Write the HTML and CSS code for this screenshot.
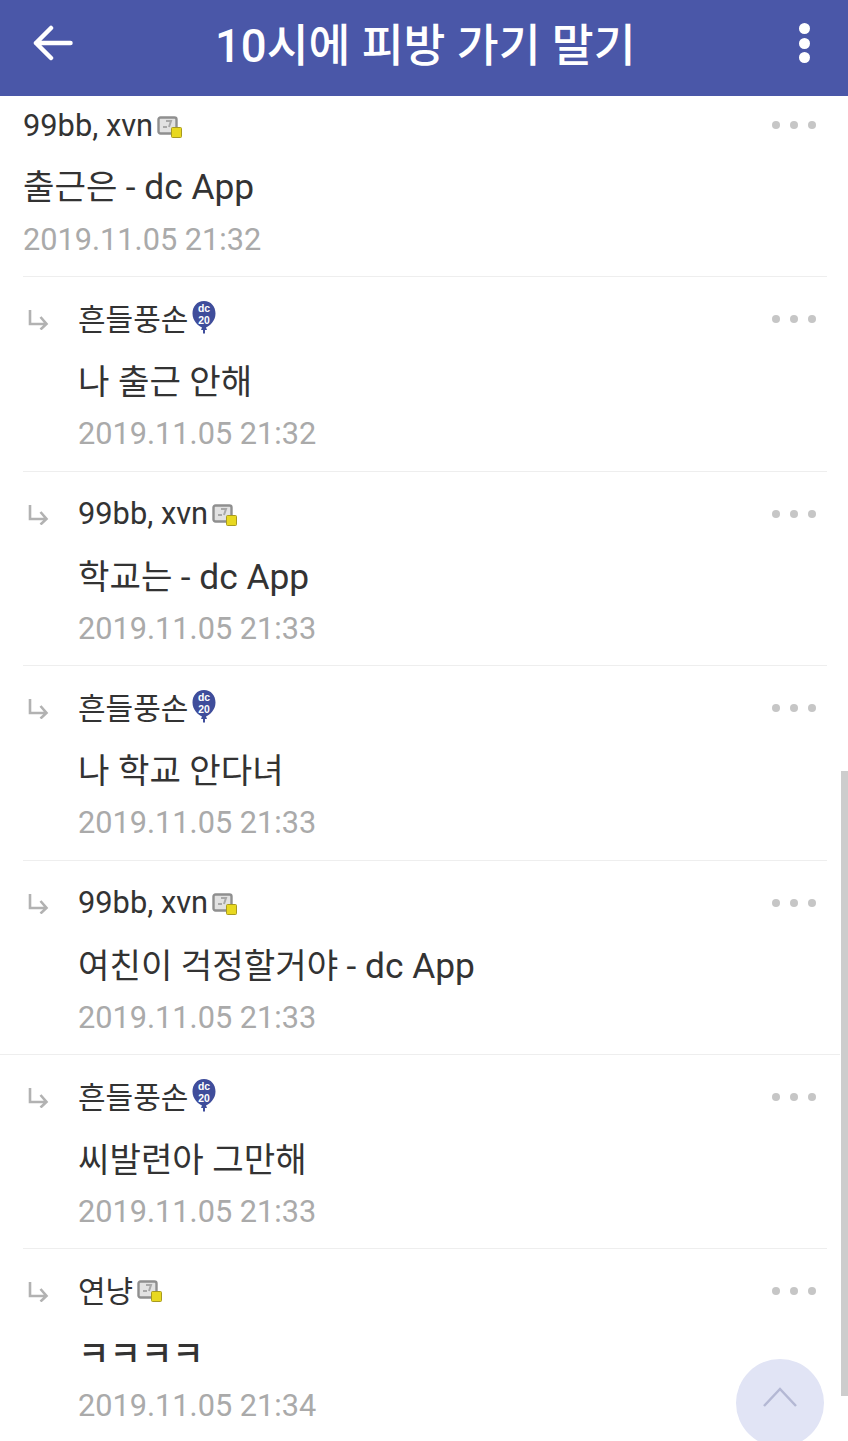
FILE: index.html
```html
<!DOCTYPE html>
<html lang="ko">

<head>
    <meta charset="utf-8">
    <meta name="viewport" content="width=device-width, initial-scale=1.0">
    <title>10시에 피방 가기 말기</title>
    <link rel="stylesheet" href="styles.css">
</head>

<body>
    <svg class="defs" width="0" height="0">
        <symbol id="nogonick" viewBox="0 0 25 22">
            <rect x="1.500" y="1.500" width="18" height="16" rx="2" fill="#e2e2e2" stroke="#8f8f8f" stroke-width="2.400" />
            <path d="M6 11h4M9 5h5l-2 6" stroke="#a8a8a8" stroke-width="2" fill="none" />
            <rect x="14.500" y="11.500" width="10" height="10" rx="1" fill="#e8d820" stroke="#a89a20" stroke-width="1" />
        </symbol>
        <symbol id="reply" viewBox="0 0 22 22">
            <path d="M3 2V16H19M13.500 9L19.500 16L13.500 21.500" fill="none" stroke="#b2b2b2" stroke-width="2.600" />
        </symbol>
    </svg>

    <div class="page">
        <header class="topbar">
            <svg class="back" viewBox="0 0 40 36" width="40" height="36">
                <path d="M37.500 18H3M18 3L3 18L18 33" fill="none" stroke="#fff" stroke-width="4.500" stroke-linecap="round" stroke-linejoin="round" />
            </svg>
            <h1 class="title">10시에 피방 가기 말기</h1>
            <div class="kebab"><span></span><span></span><span></span></div>
        </header>

        <main class="list">
            <div class="comment first">
                <div class="body">
                    <div class="name latin">99bb, xvn<svg class="badge"><use href="#nogonick" /></svg></div>
                    <div class="text">출근은 <span class="tail">- dc App</span></div>
                    <div class="date">2019.11.05 21:32</div>
                </div>
                <div class="more"><span></span><span></span><span></span></div>
            </div>
            <div class="comment">
                <svg class="arrow"><use href="#reply" /></svg>
                <div class="body">
                    <div class="name">흔들풍손<svg class="badge tall" viewBox="0 0 26 34"><path d="M13 1C6 1 1.500 6.500 1.500 13.500C1.500 21 7.500 26 11 27.500L10 30H12V33.500H14V30H16L15 27.500C18.500 26 24.500 21 24.500 13.500C24.500 6.500 20 1 13 1Z" fill="#3f4d9b" /><text class="balloon-text" x="13" y="11.500" text-anchor="middle">dc</text><text class="balloon-text" x="13" y="23.500" text-anchor="middle">20</text></svg></div>
                    <div class="text">나 출근 안해</div>
                    <div class="date">2019.11.05 21:32</div>
                </div>
                <div class="more"><span></span><span></span><span></span></div>
            </div>
            <div class="comment">
                <svg class="arrow"><use href="#reply" /></svg>
                <div class="body">
                    <div class="name latin">99bb, xvn<svg class="badge"><use href="#nogonick" /></svg></div>
                    <div class="text">학교는 <span class="tail">- dc App</span></div>
                    <div class="date">2019.11.05 21:33</div>
                </div>
                <div class="more"><span></span><span></span><span></span></div>
            </div>
            <div class="comment">
                <svg class="arrow"><use href="#reply" /></svg>
                <div class="body">
                    <div class="name">흔들풍손<svg class="badge tall" viewBox="0 0 26 34"><path d="M13 1C6 1 1.500 6.500 1.500 13.500C1.500 21 7.500 26 11 27.500L10 30H12V33.500H14V30H16L15 27.500C18.500 26 24.500 21 24.500 13.500C24.500 6.500 20 1 13 1Z" fill="#3f4d9b" /><text class="balloon-text" x="13" y="11.500" text-anchor="middle">dc</text><text class="balloon-text" x="13" y="23.500" text-anchor="middle">20</text></svg></div>
                    <div class="text">나 학교 안다녀</div>
                    <div class="date">2019.11.05 21:33</div>
                </div>
                <div class="more"><span></span><span></span><span></span></div>
            </div>
            <div class="comment wide-line">
                <svg class="arrow"><use href="#reply" /></svg>
                <div class="body">
                    <div class="name latin">99bb, xvn<svg class="badge"><use href="#nogonick" /></svg></div>
                    <div class="text">여친이 걱정할거야 <span class="tail">- dc App</span></div>
                    <div class="date">2019.11.05 21:33</div>
                </div>
                <div class="more"><span></span><span></span><span></span></div>
            </div>
            <div class="comment">
                <svg class="arrow"><use href="#reply" /></svg>
                <div class="body">
                    <div class="name">흔들풍손<svg class="badge tall" viewBox="0 0 26 34"><path d="M13 1C6 1 1.500 6.500 1.500 13.500C1.500 21 7.500 26 11 27.500L10 30H12V33.500H14V30H16L15 27.500C18.500 26 24.500 21 24.500 13.500C24.500 6.500 20 1 13 1Z" fill="#3f4d9b" /><text class="balloon-text" x="13" y="11.500" text-anchor="middle">dc</text><text class="balloon-text" x="13" y="23.500" text-anchor="middle">20</text></svg></div>
                    <div class="text">씨발련아 그만해</div>
                    <div class="date">2019.11.05 21:33</div>
                </div>
                <div class="more"><span></span><span></span><span></span></div>
            </div>
            <div class="comment">
                <svg class="arrow"><use href="#reply" /></svg>
                <div class="body">
                    <div class="name">연냥<svg class="badge"><use href="#nogonick" /></svg></div>
                    <div class="text heavy">ㅋㅋㅋㅋ</div>
                    <div class="date">2019.11.05 21:34</div>
                </div>
                <div class="more"><span></span><span></span><span></span></div>
            </div>
        </main>

        <div class="scrollbar"></div>
        <button class="to-top">
            <svg viewBox="0 0 36 22" width="36" height="22">
                <path d="M2 20L18 3L34 20" fill="none" stroke="#b4b8d4" stroke-width="2.500" />
            </svg>
        </button>
    </div>
</body>

</html>
```

FILE: styles.css
```css
* {
    box-sizing: border-box;
}

body {
    margin: 0;
    background: #fff;
    font-family: Roboto, "Noto Sans CJK KR", sans-serif;
    color: #333;
}

.defs {
    position: absolute;
}

.page {
    position: relative;
    height: 1441px;
    overflow: hidden;
}

.topbar {
    height: 96px;
    display: flex;
    align-items: center;
    padding: 0 38px 10px 33px;
    background: #4a57a8;
}

.title {
    margin: 0 0 2px 142px;
    font-size: 45.5px;
    font-weight: 500;
    color: #fff;
    white-space: nowrap;
}

.kebab {
    display: flex;
    flex-direction: column;
    gap: 3.5px;
    margin-left: auto;
}

.kebab span {
    width: 11px;
    height: 11px;
    border-radius: 50%;
    background: #fff;
}

.comment {
    position: relative;
    height: 194.4px;
    display: flex;
    padding: 20px 0 0 27px;
}

.comment::after {
    content: "";
    position: absolute;
    left: 23px;
    right: 21px;
    bottom: 0;
    height: 1px;
    background: #eee;
}

.comment.first {
    height: 181.4px;
    padding: 8px 0 0 23px;
}

.comment.wide-line::after {
    left: 0;
    right: 8px;
}

.arrow {
    width: 22px;
    height: 22px;
    margin: 11px 29px 0 0;
    flex: none;
}

.name {
    height: 40px;
    display: flex;
    align-items: center;
    font-size: 30px;
    color: #333;
    white-space: nowrap;
}

.name.latin {
    padding-top: 4px;
    font-size: 30.8px;
}

.first .name.latin {
    padding-top: 2px;
}

.badge {
    width: 25px;
    height: 22px;
    margin: 3px 0 0 4px;
}

.badge.tall {
    width: 26px;
    height: 34px;
    margin: 0 0 0 3px;
}

.balloon-text {
    font-family: "Liberation Sans", sans-serif;
    font-size: 10.4px;
    font-weight: 700;
    fill: #fff;
}

.text {
    height: 44px;
    margin-top: 23px;
    font-size: 34.2px;
    line-height: 44px;
    color: #333;
    white-space: nowrap;
}

.text.heavy {
    font-weight: 500;
}

.tail {
    font-size: 35.3px;
}

.date {
    height: 40px;
    margin-top: 10px;
    font-size: 30.7px;
    line-height: 40px;
    color: #aaa;
    white-space: nowrap;
}

.first .text {
    margin-top: 21px;
}

.first .date {
    margin-top: 11px;
}

.more {
    position: absolute;
    top: 38px;
    left: 772px;
    display: flex;
    gap: 10px;
}

.first .more {
    top: 25px;
}

.more span {
    width: 8px;
    height: 8px;
    border-radius: 50%;
    background: #c6c6c6;
}

.scrollbar {
    position: absolute;
    top: 771px;
    right: 0;
    width: 7px;
    height: 625px;
    background: #cdcdcd;
}

.to-top {
    position: absolute;
    left: 736px;
    top: 1359px;
    width: 88px;
    height: 88px;
    padding: 0 0 10px;
    border: 0;
    border-radius: 50%;
    background: #e1e4f5;
}
```
